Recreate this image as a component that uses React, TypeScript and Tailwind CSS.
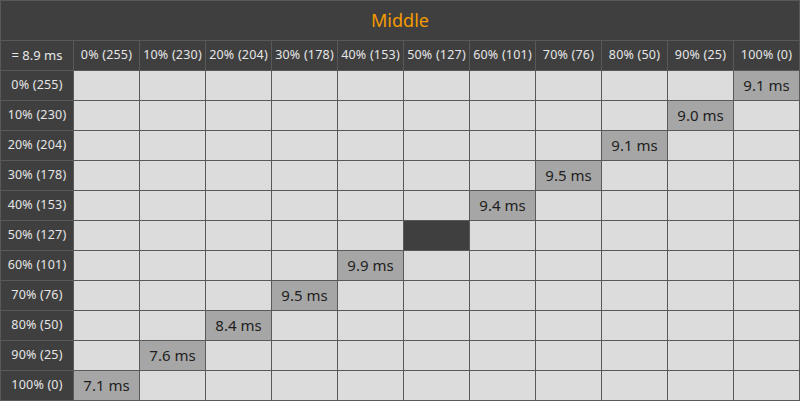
import React from "react";

const cols = ["0% (255)", "10% (230)", "20% (204)", "30% (178)", "40% (153)", "50% (127)", "60% (101)", "70% (76)", "80% (50)", "90% (25)", "100% (0)"];
const values: Record<number, string> = { 0: "9.1 ms", 1: "9.0 ms", 2: "9.1 ms", 3: "9.5 ms", 4: "9.4 ms", 6: "9.9 ms", 7: "9.5 ms", 8: "8.4 ms", 9: "7.6 ms", 10: "7.1 ms" };

export default function App() {
  return (
    <div className="w-[800px] h-[401px] bg-[#595959] p-px overflow-hidden" style={{ fontFamily: '"Noto Sans", "Open Sans", sans-serif' }}>
      <div className="grid grid-cols-[72px_repeat(11,65px)] grid-rows-[39px_29px_repeat(11,29px)] gap-px">
        <div className="col-span-12 bg-[#3f3f3f] flex items-center justify-center text-[18px] text-[#f59a00]">Middle</div>
        <div className="bg-[#3f3f3f] flex items-center justify-center text-[13px] text-[#e6e6e6]">= 8.9 ms</div>
        {cols.map((c) => (
          <div key={c} className="bg-[#3f3f3f] flex items-center justify-center text-[12.5px] text-[#e6e6e6] whitespace-nowrap tracking-[0.2px]">{c}</div>
        ))}
        {cols.map((r, ri) => (
          <React.Fragment key={r}>
            <div className="bg-[#3f3f3f] flex items-center justify-center text-[12.5px] text-[#e6e6e6] whitespace-nowrap tracking-[0.2px]">{r}</div>
            {cols.map((_, ci) => {
              const diag = ci === 10 - ri;
              if (diag && ri === 5) return <div key={ci} className="bg-[#3f3f3f]" />;
              if (diag)
                return (
                  <div key={ci} className="bg-[#a6a6a6] flex items-center justify-center text-[15px] text-[#1e1e1e] whitespace-nowrap">{values[ri]}</div>
                );
              return <div key={ci} className="bg-[#dcdcdc]" />;
            })}
          </React.Fragment>
        ))}
      </div>
    </div>
  );
}
